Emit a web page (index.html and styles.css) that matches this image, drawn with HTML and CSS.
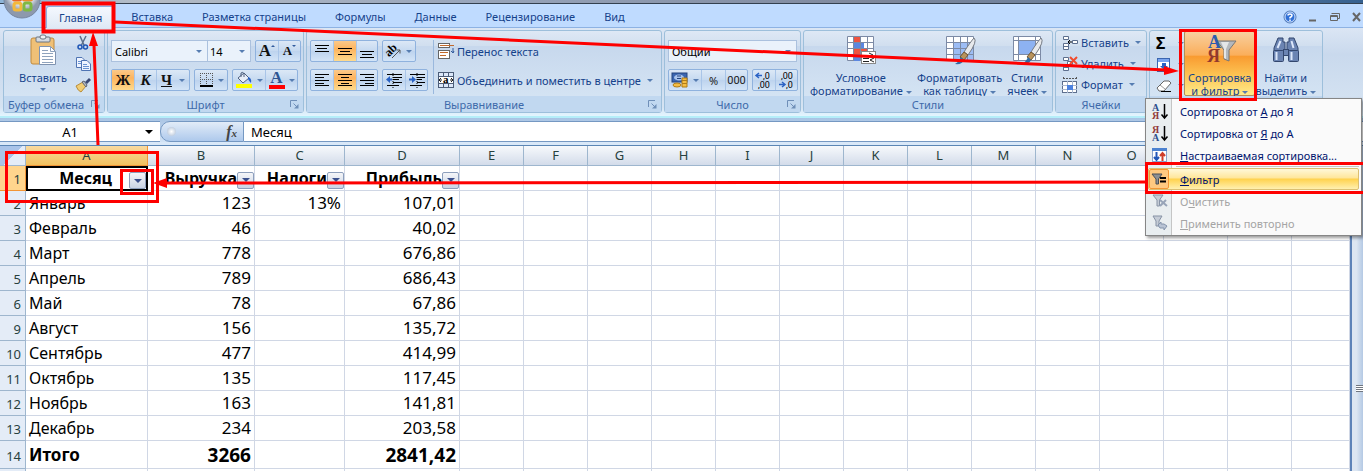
FILE: index.html
```html
<!DOCTYPE html>
<html lang="ru">
<head>
    <meta charset="UTF-8">
    <meta name="viewport" content="width=device-width, initial-scale=1.0">
    <title>Фильтр в таблице</title>
    <link rel="stylesheet" href="styles.css">
</head>
<body>
    <div class="app">
        <div class="titlebar"></div>

        <nav class="tabs">
            <a href="#" class="active">Главная</a>
            <a href="#">Вставка</a>
            <a href="#">Разметка страницы</a>
            <a href="#">Формулы</a>
            <a href="#">Данные</a>
            <a href="#">Рецензирование</a>
            <a href="#">Вид</a>
            <div class="window-buttons">
                <button type="button" aria-label="Справка">
                    <svg width="14" height="14"><circle cx="7" cy="7" r="6" fill="#2f6fd6" stroke="#5a7fb5"/><circle cx="7" cy="7" r="5" fill="none" stroke="#d6e6ff"/><path d="M5 5.5Q5 4 7 4T9 5.500Q9 6.500 7 7.500V8.500M7 9.500V11" fill="none" stroke="#fff" stroke-width="1.500"/></svg>
                </button>
                <button type="button" aria-label="Свернуть">
                    <svg width="14" height="14"><path d="M4 10.500H11" stroke="#666" stroke-width="2"/></svg>
                </button>
                <button type="button" aria-label="Восстановить">
                    <svg width="14" height="14"><path d="M4.500 3.500H12.500V8.500H10.500M3.500 5.500H10.500V10.500H3.500ZM3 6.500H11" fill="none" stroke="#666"/></svg>
                </button>
                <button type="button" aria-label="Закрыть">
                    <svg width="14" height="14"><path d="M4 3L11 11M11 3L4 11" stroke="#666" stroke-width="2"/></svg>
                </button>
            </div>
        </nav>

        <div class="ribbon">
            <section class="group group-clipboard">
                <div class="group-body">
                    <button type="button" class="big">
                        <svg width="32" height="32"><rect x="4" y="4" width="23" height="26" rx="2" fill="#efc077" stroke="#c08a3e"/><rect x="9" y="3" width="14" height="5" rx="1" fill="#d5dbe2" stroke="#6b7580"/><rect x="13" y="1" width="6" height="4" rx="2" fill="#eef2f6" stroke="#6b7580"/><path d="M12.500 12.500H23.500L28.500 17.500V30.500H12.500Z" fill="#fff" stroke="#7f93b0"/><path d="M23.500 12.500V17.500H28.500M15 16.500H21M15 19.500H26M15 22.500H26M15 25.500H26M15 28.500H26" fill="none" stroke="#8fa3bd"/></svg>
                        <span>Вставить</span>
                        <i class="caret"></i>
                    </button>
                    <div class="stack">
                        <button type="button" aria-label="Вырезать">
                            <svg width="16" height="16"><path d="M5 1L9 10M11 1L6.500 10" stroke="#5b6f8c" stroke-width="1.500"/><circle cx="5" cy="12" r="2" fill="none" stroke="#1f56b5" stroke-width="1.500"/><circle cx="10.500" cy="12" r="2" fill="none" stroke="#1f56b5" stroke-width="1.500"/></svg>
                        </button>
                        <button type="button" aria-label="Копировать">
                            <svg width="16" height="16"><path d="M1.500 1.500H7L9.500 4V11.500H1.500Z" fill="#eef4ff" stroke="#4f74b3"/><path d="M3 5.500H7M3 7.500H7" stroke="#6a93d1"/><path d="M6.500 4.500H12L15.500 8V14.500H6.500Z" fill="#eef4ff" stroke="#4f74b3"/><path d="M8 8.500H12M8 10.500H14M8 12.500H14" stroke="#6a93d1"/></svg>
                        </button>
                        <button type="button" aria-label="Формат по образцу">
                            <svg width="16" height="16"><path d="M1 9L8 5L11 9L6 15Q3 14 1 9Z" fill="#f1cd74" stroke="#b98d3b"/><path d="M7 5L9 4L12 8L11 10Z" fill="#b9bfc9" stroke="#5c6473"/><path d="M10 5L14 1L16 3L12 7Z" fill="#3b4a76"/></svg>
                        </button>
                    </div>
                </div>
                <h2>Буфер обмена <svg width="9" height="9"><path d="M.5 7V.5H7M3.500 3.500L7 7" fill="none" stroke="#6f8fb8"/><path d="M4 8.500H8.500V4Z" fill="#6f8fb8"/></svg></h2>
            </section>

            <section class="group group-font">
                <div class="group-body rows">
                    <div class="row">
                        <div class="combos">
                            <label class="combo combo-font"><select aria-label="Шрифт"><option>Calibri</option></select><i class="caret"></i></label>
                            <label class="combo combo-size"><select aria-label="Размер шрифта"><option>14</option></select><i class="caret"></i></label>
                        </div>
                        <div class="set">
                            <button type="button" class="serif grow" aria-label="Увеличить размер шрифта">A<i class="mark up"></i></button>
                            <button type="button" class="serif shrink" aria-label="Уменьшить размер шрифта">A<i class="mark"></i></button>
                        </div>
                    </div>
                    <div class="row">
                        <div class="set">
                            <button type="button" class="serif on">Ж</button>
                            <button type="button" class="serif italic">К</button>
                            <button type="button" class="serif under"><u>Ч</u><i class="caret"></i></button>
                        </div>
                        <div class="set">
                            <button type="button" class="with-caret" aria-label="Границы">
                                <svg width="16" height="16"><path d="M2.500 1V13M8.500 1V13M14.500 1V13M2 1.500H15M2 7.500H15" stroke="#555" stroke-dasharray="1 1"/><path d="M2 14H15" stroke="#000" stroke-width="2"/></svg>
                                <i class="caret"></i>
                            </button>
                        </div>
                        <div class="set">
                            <button type="button" class="with-caret" aria-label="Цвет заливки">
                                <svg width="18" height="18"><path d="M3 7L9 2L14 7L8 12Z" fill="#e8eef8" stroke="#50617f"/><path d="M6 6V2Q8 0 9 3V6" fill="none" stroke="#50617f"/><path d="M13 6Q17 7 16 12Q14 10 13 8Z" fill="#2a62c4"/><rect x="1" y="13" width="16" height="4" fill="#ff0"/></svg>
                                <i class="caret"></i>
                            </button>
                            <button type="button" class="with-caret font-color" aria-label="Цвет текста"><span>A</span><i class="caret"></i></button>
                        </div>
                    </div>
                </div>
                <h2>Шрифт <svg width="9" height="9"><path d="M.5 7V.5H7M3.500 3.500L7 7" fill="none" stroke="#6f8fb8"/><path d="M4 8.500H8.500V4Z" fill="#6f8fb8"/></svg></h2>
            </section>

            <section class="group group-align">
                <div class="group-body">
                    <div class="rows">
                        <div class="row">
                            <div class="set thirds">
                                <button type="button" aria-label="По верхнему краю"><svg width="16" height="16"><path d="M1 2.500H15M3 5.500H13M1 8.500H15" stroke="#000"/></svg></button>
                                <button type="button" class="on" aria-label="По середине"><svg width="16" height="16"><path d="M1 5.500H15M3 8.500H13M1 11.500H15" stroke="#000"/></svg></button>
                                <button type="button" aria-label="По нижнему краю"><svg width="16" height="16"><path d="M1 8.500H15M3 11.500H13M1 14.500H15" stroke="#000"/></svg></button>
                            </div>
                            <div class="set">
                                <button type="button" class="with-caret" aria-label="Ориентация">
                                    <svg width="16" height="16"><text x="-1" y="11" transform="rotate(-45 5 8)" font-family="Liberation Serif" font-size="12" font-weight="bold">ab</text><path d="M6 15L14 7M10.500 7H14V10.500" fill="none" stroke="#555"/></svg>
                                    <i class="caret"></i>
                                </button>
                            </div>
                        </div>
                        <div class="row">
                            <div class="set thirds">
                                <button type="button" aria-label="По левому краю"><svg width="16" height="16"><path d="M1 2.500H15M1 5.500H10M1 8.500H15M1 11.500H10M1 13.500H15" stroke="#000"/></svg></button>
                                <button type="button" class="on" aria-label="По центру"><svg width="16" height="16"><path d="M1 2.500H15M4 5.500H12M1 8.500H15M4 11.500H12M1 13.500H15" stroke="#000"/></svg></button>
                                <button type="button" aria-label="По правому краю"><svg width="16" height="16"><path d="M1 2.500H15M6 5.500H15M1 8.500H15M6 11.500H15M1 13.500H15" stroke="#000"/></svg></button>
                            </div>
                            <div class="set">
                                <button type="button" aria-label="Уменьшить отступ"><svg width="16" height="16"><path d="M1 2.500H16M7 5.500H16M7 7.500H13M7 10.500H16M1 13.500H13" stroke="#000"/><path d="M7 1V16" stroke="#000" stroke-dasharray="1 1"/><path d="M0 7.500L4 4V6.500H6V8.500H4V11Z" fill="#2a62c4"/></svg></button>
                                <button type="button" aria-label="Увеличить отступ"><svg width="16" height="16"><path d="M1 2.500H16M8 5.500H16M8 7.500H13M8 10.500H16M1 13.500H13" stroke="#000"/><path d="M8 1V16" stroke="#000" stroke-dasharray="1 1"/><path d="M7 7.500L3 4V6.500H0V8.500H3V11Z" fill="#2a62c4"/></svg></button>
                            </div>
                        </div>
                    </div>
                    <div class="rows wide">
                        <button type="button" class="line">
                            <svg width="16" height="16"><path d="M0 2.500H15M0 11.500H8" stroke="#555"/><rect x=".5" y=".5" width="11" height="4" fill="#fff" stroke="#666"/><path d="M2 2.500H16" stroke="#c26a2c"/><rect x=".5" y="7.500" width="11" height="8" fill="#fff" stroke="#666"/><path d="M2 9.500H10M2 12.500H8" stroke="#c26a2c"/><path d="M15 5V10M13 8L15 10L16 8" fill="none" stroke="#315b9d"/></svg>
                            <span>Перенос текста</span>
                        </button>
                        <button type="button" class="line">
                            <svg width="16" height="16"><rect x=".5" y=".5" width="15" height="15" fill="#dce8fa" stroke="#4c5d78"/><path d="M0 4.500H16M0 11.500H16M5.500 0V4M10.500 0V4M5.500 12V16M10.500 12V16" stroke="#4c5d78"/><rect x="1" y="5" width="14" height="6" fill="#fff"/><path d="M1 8H4M12 8H15M3 6L1 8L3 10M13 6L15 8L13 10" fill="none" stroke="#222"/><text x="5" y="11" font-family="Liberation Serif" font-size="11" font-weight="bold">a</text></svg>
                            <span>Объединить и поместить в центре</span><i class="caret"></i>
                        </button>
                    </div>
                </div>
                <h2>Выравнивание <svg width="9" height="9"><path d="M.5 7V.5H7M3.500 3.500L7 7" fill="none" stroke="#6f8fb8"/><path d="M4 8.500H8.500V4Z" fill="#6f8fb8"/></svg></h2>
            </section>

            <section class="group group-number">
                <div class="group-body rows">
                    <label class="combo"><select aria-label="Числовой формат"><option>Общий</option></select><i class="caret"></i></label>
                    <div class="row">
                        <div class="set">
                            <button type="button" class="with-caret" aria-label="Финансовый формат">
                                <svg width="18" height="16"><rect x="1" y="1" width="15" height="9" fill="#3b66b0" stroke="#24457e"/><ellipse cx="8" cy="5.500" rx="5" ry="3" fill="#a9c4ec"/><path d="M6 4H10M6 6.500H10" stroke="#24457e"/><path d="M11 6H16V15H11Z" fill="#f5bd43" stroke="#b07c17"/><path d="M11 8.500H16M11 11.500H16" stroke="#b07c17"/><ellipse cx="6" cy="13" rx="4" ry="2" fill="#f5bd43" stroke="#b07c17"/></svg>
                                <i class="caret"></i>
                            </button>
                            <button type="button" class="percent">%</button>
                            <button type="button" class="thousand">000</button>
                        </div>
                        <div class="set">
                            <button type="button" aria-label="Увеличить разрядность"><svg width="18" height="18" font-family="Roboto" font-size="9"><path d="M1 4.500H7M4 2L1 4.500L4 7" fill="none" stroke="#2a62c4" stroke-width="1.500"/><text x="8" y="8">,0</text><text x="3" y="17">,00</text></svg></button>
                            <button type="button" aria-label="Уменьшить разрядность"><svg width="18" height="18" font-family="Roboto" font-size="9"><text x="3" y="8">,00</text><path d="M1 13.500H7M4 11L7 13.500L4 16" fill="none" stroke="#2a62c4" stroke-width="1.500"/><text x="8" y="17">,0</text></svg></button>
                        </div>
                    </div>
                </div>
                <h2>Число <svg width="9" height="9"><path d="M.5 7V.5H7M3.500 3.500L7 7" fill="none" stroke="#6f8fb8"/><path d="M4 8.500H8.500V4Z" fill="#6f8fb8"/></svg></h2>
            </section>

            <section class="group group-styles">
                <div class="group-body">
                    <button type="button" class="big">
                        <svg width="32" height="32"><path d="M2.500 2.500H28.500V26.500H2.500Z" fill="#fff" stroke="#7c8aa5"/><path d="M8 3H15V27H8Z" fill="#ee5340"/><path d="M8 9H19V15H8Z" fill="#5b87e0"/><path d="M8 15H22V20H8Z" fill="#ee5340"/><path d="M8 20H15V27H8Z" fill="#5b87e0"/><path d="M2 8.500H29M2 14.500H29M2 20.500H29M8.500 2V27M15.500 2V27M22.500 2V27" stroke="#7c8aa5"/><rect x="16.500" y="17.500" width="14" height="12" fill="#fff" stroke="#888"/><path d="M18 24.500H24M18 27.500H24M24 19L28 21L24 23M29 24L25 26L29 28" fill="none" stroke="#222"/></svg>
                        <span>Условное</span>
                        <span>форматирование <i class="caret"></i></span>
                    </button>
                    <button type="button" class="big">
                        <svg width="32" height="32"><path d="M2.500 2.500H29.500V26.500H2.500Z" fill="#fff" stroke="#7c8aa5"/><path d="M9 9H29V27H9Z" fill="#9dbdf5"/><path d="M2 8.500H30M2 14.500H30M2 20.500H30M9.500 2V27M16.500 2V27M23.500 2V27" stroke="#7c8aa5"/><path d="M30 4Q34 7 24 21L20 18Q27 7 30 4Z" fill="#e7e9ec" stroke="#757b84"/><path d="M20 18L24 21L20 26L16 23Z" fill="#b9935b" stroke="#725631"/><path d="M17 23L20 26Q18 31 11 30Q15 28 17 23Z" fill="#2f6aa6"/></svg>
                        <span>Форматировать</span>
                        <span>как таблицу <i class="caret"></i></span>
                    </button>
                    <button type="button" class="big">
                        <svg width="32" height="32"><path d="M2.500 2.500H29.500V26.500H2.500Z" fill="#fff" stroke="#7c8aa5"/><path d="M2 6.500H30M2 20.500H30M7.500 2V27M24.500 2V27" stroke="#7c8aa5"/><path d="M8 7H24V20H8Z" fill="#8db2f2"/><path d="M30 4Q34 7 24 21L20 18Q27 7 30 4Z" fill="#e7e9ec" stroke="#757b84"/><path d="M20 18L24 21L20 26L16 23Z" fill="#b9935b" stroke="#725631"/><path d="M17 23L20 26Q18 31 11 30Q15 28 17 23Z" fill="#2f6aa6"/></svg>
                        <span>Стили</span>
                        <span>ячеек <i class="caret"></i></span>
                    </button>
                </div>
                <h2>Стили</h2>
            </section>

            <section class="group group-cells">
                <div class="group-body stack">
                    <button type="button" class="line">
                        <svg width="16" height="16"><path d="M1.500 1.500H6.500V4.500H1.500ZM1.500 8.500H6.500V14.500H1.500ZM1.500 11.500H6.500M10.500 5.500H15.500V8.500H10.500Z" fill="#fff" stroke="#5d6f8e"/><path d="M6 7H10M8 5L6 7L8 9" fill="none" stroke="#000"/></svg>
                        <span>Вставить</span><i class="caret"></i>
                    </button>
                    <button type="button" class="line">
                        <svg width="16" height="16"><path d="M1.500 1.500H6.500V4.500H1.500ZM1.500 8.500H6.500V14.500H1.500ZM1.500 11.500H6.500M5.500 5.500H10.500V8.500H5.500Z" fill="#fff" stroke="#5d6f8e"/><path d="M8 1L15 8M15 1L8 8" stroke="#f04b2d" stroke-width="2"/></svg>
                        <span>Удалить</span><i class="caret"></i>
                    </button>
                    <button type="button" class="line">
                        <svg width="16" height="16"><path d="M1 1.500H15M1.500 0V3M14.500 0V3" stroke="#555" stroke-dasharray="2 1"/><rect x=".5" y="4.500" width="14" height="11" fill="#fff" stroke="#5d6f8e"/><path d="M5.500 4V16M10.500 4V16M0 8.500H15M0 12.500H15" stroke="#a9b8cf"/><path d="M5 8H11V13H5Z" fill="#4c82e0"/></svg>
                        <span>Формат</span><i class="caret"></i>
                    </button>
                </div>
                <h2>Ячейки</h2>
            </section>

            <section class="group group-edit">
                <div class="group-body">
                    <div class="stack">
                        <button type="button" class="line sigma">Σ<i class="caret"></i></button>
                        <button type="button" class="line" aria-label="Заполнить"><svg width="16" height="16"><rect x="1.500" y="1.500" width="12" height="13" fill="#fff" stroke="#3b66b0"/><path d="M2 2H13V5H2Z" fill="#79a4ee"/><path d="M6 6H10V9H12L8 13L4 9H6Z" fill="#2a62c4"/></svg><i class="caret"></i></button>
                        <button type="button" class="line" aria-label="Очистить"><svg width="16" height="16"><path d="M1 10L8 3H13L15 5L8 13H3Z" fill="#fff" stroke="#666"/><path d="M4 7L9 11" stroke="#999"/><path d="M5 13.500H15" stroke="#000"/></svg><i class="caret"></i></button>
                    </div>
                    <button type="button" class="big pressed" aria-expanded="true">
                        <svg width="32" height="32"><path d="M13 7H32L25 16V27L20 25V16Z" fill="#b4b8bd" stroke="#777"/><path d="M17 8H25L22 15V25L20 24V15Z" fill="#e4e6e8"/><g font-family="Liberation Serif" font-size="18" font-weight="bold"><text x="4" y="14" fill="#2d5cae">А</text><text x="3" y="28" fill="#923a2d">Я</text></g></svg>
                        <span>Сортировка</span>
                        <span>и фильтр <i class="caret"></i></span>
                    </button>
                    <button type="button" class="big">
                        <svg width="32" height="32"><g stroke="#33476e" fill="#6b84b2"><path d="M8 4H13V8H15V16H13V19H4V14Z"/><path d="M19 4H24L28 14V19H19V16H17V8H19Z"/><rect x="3.500" y="16.500" width="10" height="11" rx="1"/><rect x="18.500" y="16.500" width="10" height="11" rx="1"/><rect x="13.500" y="15.500" width="5" height="6"/></g><path d="M6.500 18V26M21.500 18V26M10.500 7L7.500 14M21.500 7L23.500 14" stroke="#dce7fa" stroke-width="2"/></svg>
                        <span>Найти и</span>
                        <span>выделить <i class="caret"></i></span>
                    </button>
                </div>
                <div class="group-foot"></div>
            </section>
        </div>

        <div class="formula-bar">
            <label class="name-box"><input type="text" value="A1" aria-label="Имя"><i class="caret"></i></label>
            <div class="fx"><i class="knob"></i><span><i>f</i><small>x</small></span></div>
            <input type="text" class="formula" value="Месяц" aria-label="Строка формул">
        </div>

        <main class="sheet">
            <table>
                <colgroup id="cols"></colgroup>
                <thead><tr id="letters"></tr></thead>
                <tbody id="rows"></tbody>
            </table>
            <div class="scroll"><i></i></div>
        </main>

        <div class="office"><svg width="40" height="40"><defs><radialGradient id="orb" cy=".3"><stop offset="0" stop-color="#fff"/><stop offset=".7" stop-color="#dde1e8"/><stop offset="1" stop-color="#8d99ad"/></radialGradient></defs><circle cx="20" cy="20" r="18" fill="url(#orb)" stroke="#7787a1"/><g fill="none" stroke-width="3"><rect x="11" y="13" width="8" height="7" rx="2" stroke="#ea6526"/><rect x="21" y="11" width="9" height="9" rx="2" stroke="#ee8b2a"/><rect x="12" y="23" width="7" height="7" rx="2" stroke="#f3b93b"/><rect x="22" y="23" width="7" height="7" rx="2" stroke="#7fb943"/></g></svg></div>

        <div class="menu" role="menu">
            <button type="button" role="menuitem"><svg width="18" height="18" class="letters"><text x="1" y="9" fill="#2d4f8c">А</text><text x="1" y="17" fill="#923a3a">Я</text><path d="M13.500 2V15M10.500 12.500L13.500 16L16.500 12.500" fill="none" stroke="#000" stroke-width="1.500"/></svg><span>Сортировка от <u>А</u> до Я</span></button>
            <button type="button" role="menuitem"><svg width="18" height="18" class="letters"><text x="1" y="9" fill="#923a3a">Я</text><text x="1" y="17" fill="#2d4f8c">А</text><path d="M13.500 2V15M10.500 12.500L13.500 16L16.500 12.500" fill="none" stroke="#000" stroke-width="1.500"/></svg><span>Сортировка от <u>Я</u> до А</span></button>
            <button type="button" role="menuitem"><svg width="18" height="18"><rect x="1.500" y="2.500" width="14" height="13" fill="#fff" stroke="#8ba4cc"/><path d="M1 2H16V5H1Z" fill="#4c82d0"/><path d="M5.500 6V13M3 11L5.500 14L8 11" fill="none" stroke="#2257b8" stroke-width="2"/><path d="M11.500 15V8M9 10L11.500 7L14 10" fill="none" stroke="#cf3e2b" stroke-width="2"/></svg><span><u>Н</u>астраиваемая сортировка...</span></button>
            <hr>
            <button type="button" role="menuitem" class="current"><svg width="18" height="18"><path d="M2 4H12L8.500 9V14H6V9Z" fill="#8c8f94" stroke="#4b4e54"/><path d="M10 8H16M10 11.500H16" stroke="#000" stroke-width="2"/></svg><span><u>Ф</u>ильтр</span></button>
            <button type="button" role="menuitem" disabled><svg width="18" height="18"><path d="M2 3H12L8.500 8V14H6V8Z" fill="#c5ccd6" stroke="#8793a5"/><path d="M9 8L16 14M15 8L9 14" stroke="#97a4b8" stroke-width="2"/></svg><span>О<u>ч</u>истить</span></button>
            <button type="button" role="menuitem" disabled><svg width="18" height="18"><path d="M2 2H11L8 7V12H5V7Z" fill="#c5ccd6" stroke="#8793a5"/><path d="M7 11L10 8V10H13L16 12L13 16V14H9Z" fill="#b8c3d4" stroke="#8393ab"/></svg><span><u>П</u>рименить повторно</span></button>
        </div>

        <!-- red frames and arrows -->
        <svg class="notes" width="1363" height="471">
            <g fill="none" stroke="#fe0000" stroke-width="3">
                <rect x="43.500" y="3.500" width="70" height="28" stroke-width="4"/>
                <rect x="1180.500" y="30.500" width="75" height="69"/>
                <rect x="1146.500" y="163.500" width="220" height="29"/>
                <rect x="6.500" y="152.500" width="151" height="49"/>
                <rect x="121.500" y="170.500" width="31" height="23"/>
                <path d="M98 145L94 45M115 22L1166 70M1145 182L166 183"/>
            </g>
            <path d="M93 32L98 46H89ZM1179 71L1164 75V66ZM153 183L167 178V188Z" fill="#fe0000"/>
        </svg>
    </div>

    <script src="script.js"></script>
</body>
</html>
```
FILE: styles.css
```css
* {
    box-sizing: border-box;
}

body {
    margin: 0;
    font-family: "Noto Sans", "Open Sans", sans-serif;
    font-size: 11px;
    color: #15428b;
}

button,
input,
select {
    font: inherit;
    color: inherit;
    border: none;
    background: none;
    padding: 0;
    margin: 0;
}

svg {
    display: block;
    flex: none;
    overflow: visible;
}

.app {
    position: relative;
    display: flex;
    flex-direction: column;
    height: 100vh;
    overflow: hidden;
    background: #bfdbff;
}

.titlebar {
    flex: none;
    height: 4px;
    background: linear-gradient(90deg, #8db4d8, #b4bcc6 10%, #98a5bb 35%, #7d879c 65%, #5d7a9e 90%, #35608f);
    border-bottom: 1px solid #33404f;
}

.tabs {
    display: flex;
    flex: none;
    height: 24px;
    padding: 2px 0 0 46px;
    border-bottom: 1px solid #8db2e3;
}

.tabs a {
    padding: 0 15px 0 14px;
    line-height: 22px;
    color: #15428b;
    text-decoration: none;
}

.tabs .active {
    height: 22px;
    padding: 0 12px;
    margin-right: 2px;
    background: linear-gradient(#f4f8fe, #dfe9f5);
    border: 1px solid #8db2e3;
    border-bottom: none;
    border-radius: 3px 3px 0 0;
}

.window-buttons {
    display: flex;
    align-items: center;
    gap: 8px;
    margin-left: auto;
}

.ribbon {
    display: flex;
    flex: none;
    gap: 2px;
    height: 90px;
    padding: 2px 3px 3px;
    background: linear-gradient(#dbe6f4, #c9d9ed 30%, #d5e3f2 90%, #e3f5ff);
    border-bottom: 2px solid #b5eef9;
}

.group {
    display: flex;
    flex-direction: column;
    flex: none;
    background: linear-gradient(#dee8f5, #d1dfef 18%, #c7d8ed 19%, #d8e7f5);
    border: 1px solid #9dbfdb;
    border-radius: 3px;
}

.group-clipboard { width: 102px; }
.group-font { width: 197px; }
.group-align { width: 356px; }
.group-number { width: 137px; }
.group-styles { width: 250px; }
.group-cells { width: 92px; }
.group-edit { width: 174px; }

.group-body {
    display: flex;
    flex: 1;
    min-height: 0;
    padding: 0 3px;
}

.group h2,
.group-foot {
    display: flex;
    align-items: center;
    justify-content: center;
    flex: none;
    height: 16px;
    margin: 0;
    padding: 0 4px;
    background: #c1d8f0;
    color: #3e6aaa;
    font-size: 11px;
    font-weight: normal;
    white-space: nowrap;
}

.group h2 svg {
    margin-left: auto;
}

.group-font h2,
.group-align h2,
.group-number h2 {
    padding-left: 13px;
}

.group-font h2::before,
.group-align h2::before,
.group-number h2::before {
    content: "";
    margin-left: auto;
}

.caret {
    display: inline-block;
    flex: none;
    border: 3px solid transparent;
    border-top-color: #567db1;
    border-bottom: none;
    vertical-align: middle;
}

.big {
    display: flex;
    flex-direction: column;
    align-items: center;
    padding-top: 3px;
    line-height: 13px;
    white-space: nowrap;
}

.big svg {
    margin-bottom: 5px;
}

.group-clipboard .big {
    width: 68px;
    padding-left: 4px;
}

.group-clipboard .caret {
    margin-top: 4px;
}

.group-styles .group-body {
    justify-content: space-between;
    padding: 0 5px 0 6px;
}

.group-edit .group-body {
    justify-content: space-between;
    padding: 0 6px;
}

.pressed {
    width: 71px;
    padding-top: 2px;
    background: linear-gradient(#f8cf9f, #fbae5a 37%, #f99a30 38%, #fdc655 70%, #ffeb8c);
    border: 1px solid #b08f56;
    border-radius: 2px;
}

.stack {
    display: flex;
    flex-direction: column;
    padding-top: 1px;
}

.stack button {
    display: flex;
    align-items: center;
    height: 22px;
}

.group-body.stack {
    padding: 1px 6px;
}

.line {
    display: flex;
    align-items: center;
    height: 22px;
    gap: 3px;
    white-space: nowrap;
}

.line .caret {
    margin-left: 3px;
}

.sigma {
    justify-content: space-between;
    font-size: 16px;
    font-weight: bold;
    color: #000;
}

.rows {
    display: flex;
    flex-direction: column;
    gap: 7px;
    padding-top: 9px;
}

.row {
    display: flex;
    gap: 4px;
}

.wide {
    margin-left: 5px;
    padding-left: 5px;
}

.wide::before {
    content: "";
    position: absolute;
    width: 1px;
    height: 54px;
    margin-left: -5px;
    background: #9ab8dd;
}

.combos {
    display: flex;
    flex: none;
}

.combo {
    display: flex;
    align-items: center;
    height: 22px;
    padding: 0 5px 0 3px;
    background: #eaf2fb;
    border: 1px solid #abc1de;
    color: #000;
}

.combo-font { width: 97px; }

.combo-size {
    width: 43px;
    padding-left: 2px;
    border-left: none;
}

.combo select,
.name-box input {
    flex: 1;
    min-width: 0;
    appearance: none;
}

.set {
    display: flex;
    height: 22px;
    border: 1px solid #8fb2de;
    border-radius: 2px;
    background: linear-gradient(#dce8f6, #c5d9f0 50%, #bdd3ee 51%, #d3e4f7);
}

.set button {
    display: flex;
    align-items: center;
    justify-content: center;
    width: 22px;
}

.set button + button {
    border-left: 1px solid #a9c5e8;
}

.set .on {
    background: linear-gradient(#fbc98a, #fdb45e 40%, #feda8d);
}

.set .with-caret {
    width: 32px;
    gap: 4px;
}

.thirds .on {
    width: 23px;
}

.thirds button:last-child {
    width: 21px;
}

.set .serif {
    font-family: "Liberation Serif", serif;
    font-size: 15px;
    font-weight: bold;
    color: #111;
}

.italic {
    font-style: italic;
}

.set .under {
    width: 33px;
    gap: 7px;
}

.set .grow {
    font-size: 17px;
}

.set .shrink {
    font-size: 13px;
}

.mark {
    align-self: flex-start;
    margin-top: 4px;
    border: 2px solid transparent;
    border-top-color: #315b9d;
    border-bottom: none;
}

.up {
    border: 2px solid transparent;
    border-bottom-color: #315b9d;
    border-top: none;
}

.set .font-color span {
    width: 16px;
    height: 18px;
    border-bottom: 4px solid #f00;
    color: #2f5692;
    font: bold 17px/14px "Liberation Serif", serif;
}

.set .percent {
    width: 24px;
    color: #222;
}

.set .thousand {
    width: 22px;
    font-family: Roboto, sans-serif;
    color: #222;
}

.formula-bar {
    display: flex;
    flex: none;
    height: 28px;
    padding-top: 3px;
    background: linear-gradient(#a9c4e4, #d6e6f7);
    border-bottom: 1px solid #5b86b5;
    box-shadow: inset 0 -3px #d9e8f8;
    font-size: 13px;
    color: #000;
}

.formula-bar > * {
    height: 21px;
    border-top: 1px solid #7598c2;
    border-bottom: 1px solid #7598c2;
}

.name-box {
    display: flex;
    align-items: center;
    width: 160px;
    padding-right: 7px;
    background: #fff;
}

.name-box input {
    padding-right: 5px;
    text-align: center;
}

.name-box .caret {
    border-width: 4px 4px 0;
    border-top-color: #000;
}

.fx {
    display: flex;
    align-items: center;
    justify-content: space-between;
    width: 84px;
    padding: 0 6px;
    background: linear-gradient(#e2ecf8, #aec9ec);
    border-left: 1px solid #7598c2;
    border-right: 1px solid #7598c2;
    border-radius: 10px 0 0 10px;
    font: bold 16px "Liberation Serif", serif;
    color: #444;
}

.fx small {
    font-size: 11px;
    font-style: italic;
}

.knob {
    width: 9px;
    height: 9px;
    border-radius: 50%;
    background: radial-gradient(#fff, #a9bbd3);
}

.formula {
    flex: 1;
    background: #fff;
}

.formula-bar .formula {
    padding-left: 7px;
}

.sheet {
    display: flex;
    flex: 1;
    min-height: 0;
    overflow: hidden;
    background: #fff;
}

table {
    flex: 1;
    width: 0;
    height: max-content;
    table-layout: fixed;
    border-collapse: separate;
    border-spacing: 0;
    font-size: 16px;
    color: #000;
}

.col-head { width: 26px; }
.col-a { width: 122px; }
.col-b { width: 107px; }
.col-c { width: 90px; }
.col-d { width: 115px; }
.col-e { width: 64px; }

th,
td {
    padding: 0 3px;
    line-height: 24px;
    height: 25px;
    border-right: 1px solid #d0d7e5;
    border-bottom: 1px solid #d0d7e5;
    white-space: nowrap;
    overflow: hidden;
    text-align: left;
}

thead th {
    height: 20px;
    padding: 0;
    line-height: 19px;
    background: linear-gradient(#f7f9fc, #d3dcea);
    border-color: #9eb6ce;
    color: #27413e;
    font-size: 13px;
    font-weight: normal;
    text-align: center;
}

tbody th {
    padding: 2px 4px 0 0;
    line-height: 22px;
    background: #e4ecf7;
    border-color: #9eb6ce;
    color: #27413e;
    font-size: 13px;
    font-weight: normal;
    text-align: right;
}

thead .selected {
    background: linear-gradient(#f9d99f, #f1c15f);
    border-color: #f29536;
}

tbody .selected {
    background: #ffd58d;
    border-color: #f29536;
}

thead .corner {
    background: linear-gradient(135deg, #a9c4e9 50%, #e4ecf7 51%);
}

.num {
    font-size: 17px;
    text-align: right;
}

.title-row td > div {
    display: flex;
    align-items: center;
    justify-content: flex-end;
    font-weight: bold;
}

.title-row td {
    padding-right: 0;
}

.title-row .cell-a {
    border: 2px solid #000;
    line-height: 21px;
}

.title-row .cell-a > div {
    gap: 17px;
}

.filter {
    display: flex;
    flex: none;
    align-items: center;
    justify-content: center;
    width: 17px;
    height: 17px;
    margin-top: 4px;
    background: linear-gradient(#f5f6f9, #c9d3e3);
    border: 1px solid #8d9fbc;
    border-radius: 2px;
}

.filter .caret {
    border-width: 4px 4px 0;
    border-top-color: #3a4f8c;
}

.total td {
    height: 28px;
    font-size: 17px;
    font-weight: bold;
}

.total .num {
    font-size: 19px;
}

.scroll {
    display: flex;
    align-items: center;
    flex: none;
    width: 13px;
    padding: 160px 0 0 4px;
    border-left: 2px solid #5d83b8;
    background: linear-gradient(90deg, #dce6f2 40%, #b4c9e4);
}

.scroll i {
    width: 8px;
    height: 7px;
    background: repeating-linear-gradient(#6f7680 0 1px, #fff 1px 2px);
}

.office {
    position: absolute;
    top: -20px;
    left: 2px;
}

.menu {
    position: absolute;
    top: 98px;
    right: 1px;
    width: 217px;
    padding: 1px 2px;
    background: linear-gradient(90deg, #e9eef0 25px, #c5c5c5 25px 26px, #fafafa 26px);
    border: 1px solid #868686;
    box-shadow: 2px 2px 3px rgba(0, 0, 0, 0.4);
}

.menu button {
    display: flex;
    align-items: center;
    width: 100%;
    height: 22px;
    padding-left: 3px;
    gap: 11px;
    color: #00156e;
    white-space: nowrap;
}

.menu button:disabled {
    color: #a5a5a5;
}

.menu hr {
    height: 1px;
    margin: 0 0 1px 28px;
    border: none;
    background: #c5c5c5;
}

.menu .current {
    padding-left: 0;
    background: linear-gradient(#fff8d9, #ffe69a 45%, #ffd24d 50%, #fff0b0);
    border: 1px solid #dbbf71;
    border-radius: 2px;
}

.menu .current svg {
    width: 20px;
    height: 20px;
    background: #ffc981;
    border: 1px solid #f49735;
    border-radius: 2px;
}

.letters {
    font: bold 10px "Liberation Serif", serif;
}

.notes {
    position: absolute;
    top: 0;
    left: 0;
    pointer-events: none;
}
```
FILE: script.js
```js
document.addEventListener('DOMContentLoaded', function() {
    const names = 'ABCDEFGHIJKLMNO'.split('').concat(['', '', '']);
    const titles = ['Месяц', 'Выручка', 'Налоги', 'Прибыль'];
    const data = [
        [2, 'Январь', '123', '13%', '107,01'],
        [3, 'Февраль', '46', '', '40,02'],
        [4, 'Март', '778', '', '676,86'],
        [5, 'Апрель', '789', '', '686,43'],
        [6, 'Май', '78', '', '67,86'],
        [9, 'Август', '156', '', '135,72'],
        [10, 'Сентябрь', '477', '', '414,99'],
        [11, 'Октябрь', '135', '', '117,45'],
        [12, 'Ноябрь', '163', '', '141,81'],
        [13, 'Декабрь', '234', '', '203,58'],
        [14, 'Итого', '3266', '', '2841,42'],
        ['', '', '', '', '']
    ];

    // columns: row header, A-D, equal ones, the last takes the rest
    let cols = '<col class="col-head">';
    names.forEach(function(name, i) {
        if (i < 4) {
            cols += `<col class="col-${name.toLowerCase()}">`;
        } else {
            cols += i < names.length - 1 ? '<col class="col-e">' : '<col>';
        }
    });
    document.getElementById('cols').innerHTML = cols;

    document.getElementById('letters').innerHTML = '<th class="corner"></th>' +
        names.map((name, i) => `<th class="${i === 0 ? 'selected' : ''}">${name}</th>`).join('');

    const empty = '<td></td>'.repeat(names.length - 4);

    let html = '<tr class="title-row"><th class="selected">1</th>';
    titles.forEach(function(title, i) {
        html += `<td class="${i === 0 ? 'cell-a' : ''}"><div>${title}<button type="button" class="filter" aria-label="Фильтр: ${title}"><i class="caret"></i></button></div></td>`;
    });
    html += empty + '</tr>';

    data.forEach(function(row) {
        html += `<tr class="${row[0] === 14 ? 'total' : ''}"><th>${row[0]}</th><td>${row[1]}</td>`;
        html += row.slice(2).map(value => `<td class="num">${value}</td>`).join('');
        html += empty + '</tr>';
    });
    document.getElementById('rows').innerHTML = html;
});
```
